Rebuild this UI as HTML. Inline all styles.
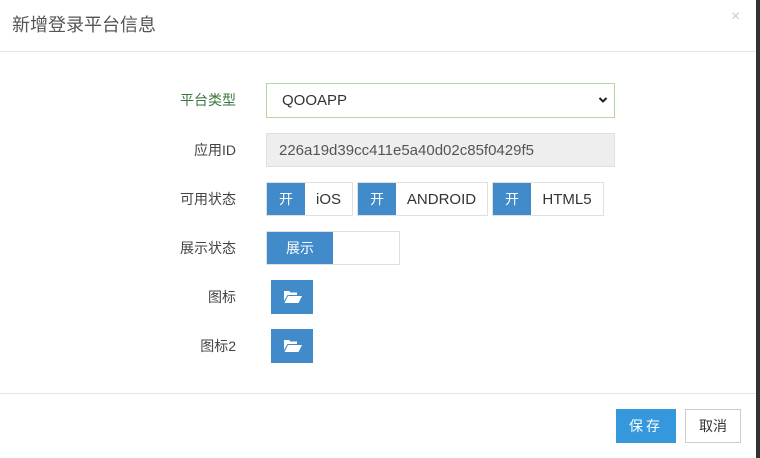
<!DOCTYPE html>
<html><head><meta charset="utf-8"><style>
*{box-sizing:border-box;margin:0;padding:0}
body{width:760px;height:458px;background:#fff;font-family:"Liberation Sans","Noto Sans CJK SC",sans-serif;position:relative;overflow:hidden;font-size:14px;color:#333}
.a{position:absolute}
.lbl{position:absolute;right:524px;font-size:14px;color:#444;line-height:20px}
.box{position:absolute;border:1px solid #e0e0e0;background:#fff}
.blue{position:absolute;background:#428bca;color:#fff;text-align:center}
.t{position:absolute;text-align:center;color:#333}
</style></head><body>
<div class="a" style="left:756px;top:0;width:4px;height:458px;background:#333"></div>
<div class="a" style="left:12px;top:13px;font-size:18px;color:#555;line-height:24px">新增登录平台信息</div>
<div class="a" style="left:731px;top:8px;font-size:16px;color:#ccc">×</div>
<div class="a" style="left:0;top:51px;width:756px;height:1px;background:#e5e5e5"></div>

<div class="lbl" style="top:90px;color:#3c763d">平台类型</div>
<div class="box" style="left:266px;top:83px;width:349px;height:35px;border-color:#b2d7a0"></div>
<div class="a" style="left:282px;top:91px;font-size:15px;line-height:20px;color:#333">QOOAPP</div>
<svg class="a" style="left:598px;top:96px" width="10" height="8" viewBox="0 0 10 8"><path d="M1.5 2 L5 5.5 L8.5 2" stroke="#222" stroke-width="2" fill="none"/></svg>

<div class="lbl" style="top:140px">应用ID</div>
<div class="box" style="left:266px;top:133px;width:349px;height:34px;background:#eee;border-color:#e0e0e0"></div>
<div class="a" style="left:279px;top:141px;font-size:15px;line-height:20px;color:#555">226a19d39cc411e5a40d02c85f0429f5</div>

<div class="lbl" style="top:189px">可用状态</div>
<div class="box" style="left:266px;top:182px;width:87px;height:34px"></div>
<div class="blue" style="left:267px;top:183px;width:38px;height:32px;line-height:32px">开</div>
<div class="t" style="left:305px;top:184px;width:47px;line-height:32px;font-size:15px">iOS</div>
<div class="box" style="left:357px;top:182px;width:131px;height:34px"></div>
<div class="blue" style="left:358px;top:183px;width:38px;height:32px;line-height:32px">开</div>
<div class="t" style="left:396px;top:184px;width:91px;line-height:32px;font-size:15px">ANDROID</div>
<div class="box" style="left:492px;top:182px;width:112px;height:34px"></div>
<div class="blue" style="left:493px;top:183px;width:38px;height:32px;line-height:32px">开</div>
<div class="t" style="left:531px;top:184px;width:72px;line-height:32px;font-size:15px">HTML5</div>

<div class="lbl" style="top:238px">展示状态</div>
<div class="box" style="left:266px;top:231px;width:134px;height:34px"></div>
<div class="blue" style="left:267px;top:232px;width:66px;height:32px;line-height:32px">展示</div>

<div class="lbl" style="top:287px">图标</div>
<div class="blue" style="left:271px;top:280px;width:42px;height:34px"></div>
<svg class="a" style="left:284px;top:290px" width="18" height="14" viewBox="0 0 18 14"><path d="M0 1h5l1.5 1.5H13V5H3.5L0 11Z M4 6h14l-3.5 7H0.5Z" fill="#fff"/></svg>
<div class="lbl" style="top:336px">图标2</div>
<div class="blue" style="left:271px;top:329px;width:42px;height:34px"></div>
<svg class="a" style="left:284px;top:339px" width="18" height="14" viewBox="0 0 18 14"><path d="M0 1h5l1.5 1.5H13V5H3.5L0 11Z M4 6h14l-3.5 7H0.5Z" fill="#fff"/></svg>

<div class="a" style="left:0;top:393px;width:756px;height:1px;background:#e5e5e5"></div>
<div class="a" style="left:616px;top:409px;width:60px;height:34px;background:#3598dc;color:#fff;text-align:center;line-height:34px;letter-spacing:3px;font-size:14px">保存</div>
<div class="a" style="left:685px;top:409px;width:56px;height:34px;border:1px solid #ccc;text-align:center;line-height:32px;font-size:14px">取消</div>
</body></html>
